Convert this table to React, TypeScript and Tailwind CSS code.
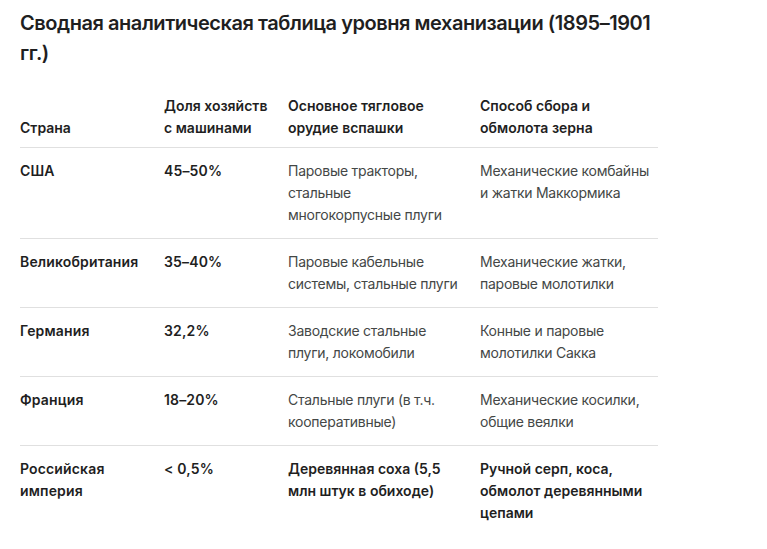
import React from "react";

interface Row {
  country: string;
  share: string;
  plough: string;
  harvest: string;
  highlight?: boolean;
}

const rows: Row[] = [
  {
    country: "США",
    share: "45–50%",
    plough: "Паровые тракторы, стальные многокорпусные плуги",
    harvest: "Механические комбайны и жатки Маккормика",
  },
  {
    country: "Великобритания",
    share: "35–40%",
    plough: "Паровые кабельные системы, стальные плуги",
    harvest: "Механические жатки, паровые молотилки",
  },
  {
    country: "Германия",
    share: "32,2%",
    plough: "Заводские стальные плуги, локомобили",
    harvest: "Конные и паровые молотилки Сакка",
  },
  {
    country: "Франция",
    share: "18–20%",
    plough: "Стальные плуги (в т.ч. кооперативные)",
    harvest: "Механические косилки, общие веялки",
  },
  {
    country: "Российская империя",
    share: "< 0,5%",
    plough: "Деревянная соха (5,5 млн штук в обиходе)",
    harvest: "Ручной серп, коса, обмолот деревянными цепами",
    highlight: true,
  },
];

export default function App() {
  return (
    <div
      className="bg-white min-h-screen px-5 pt-2 text-[#1f1f1f]"
      style={{ fontFamily: "Inter, 'Noto Sans', sans-serif" }}
    >
      <h1 className="text-[20px] leading-[30px] font-semibold w-[650px] tracking-[-0.45px]">
        Сводная аналитическая таблица уровня механизации (1895–1901 гг.)
      </h1>

      <table className="mt-[15px] w-[638px] table-fixed border-collapse text-[14px] leading-[22px]">
        <colgroup>
          <col className="w-[144px]" />
          <col className="w-[124px]" />
          <col className="w-[192px]" />
          <col className="w-[178px]" />
        </colgroup>
        <thead>
          <tr className="border-b border-[#e0e0e0]">
            <th className="text-left align-bottom font-semibold pt-3 pb-2 pr-4">Страна</th>
            <th className="text-left align-bottom font-semibold pt-3 pb-2 pr-4">Доля хозяйств с машинами</th>
            <th className="text-left align-bottom font-semibold pt-3 pb-2 pr-4">Основное тягловое орудие вспашки</th>
            <th className="text-left align-bottom font-semibold pt-3 pb-2">Способ сбора и обмолота зерна</th>
          </tr>
        </thead>
        <tbody>
          {rows.map((r, i) => (
            <tr
              key={r.country}
              className={i < rows.length - 1 ? "border-b border-[#e0e0e0]" : ""}
            >
              <td className="align-top py-3 pr-4 font-semibold tracking-[0.15px]">{r.country}</td>
              <td className="align-top py-3 pr-4 font-semibold tracking-[0.15px]">{r.share}</td>
              <td
                className={`align-top py-3 pr-4 ${
                  r.highlight ? "font-semibold" : "text-[#444746] tracking-[-0.25px]"
                }`}
              >
                {r.plough}
              </td>
              <td
                className={`align-top py-3 ${
                  r.highlight ? "font-semibold" : "text-[#444746] tracking-[-0.25px]"
                }`}
              >
                {r.harvest}
              </td>
            </tr>
          ))}
        </tbody>
      </table>
    </div>
  );
}
